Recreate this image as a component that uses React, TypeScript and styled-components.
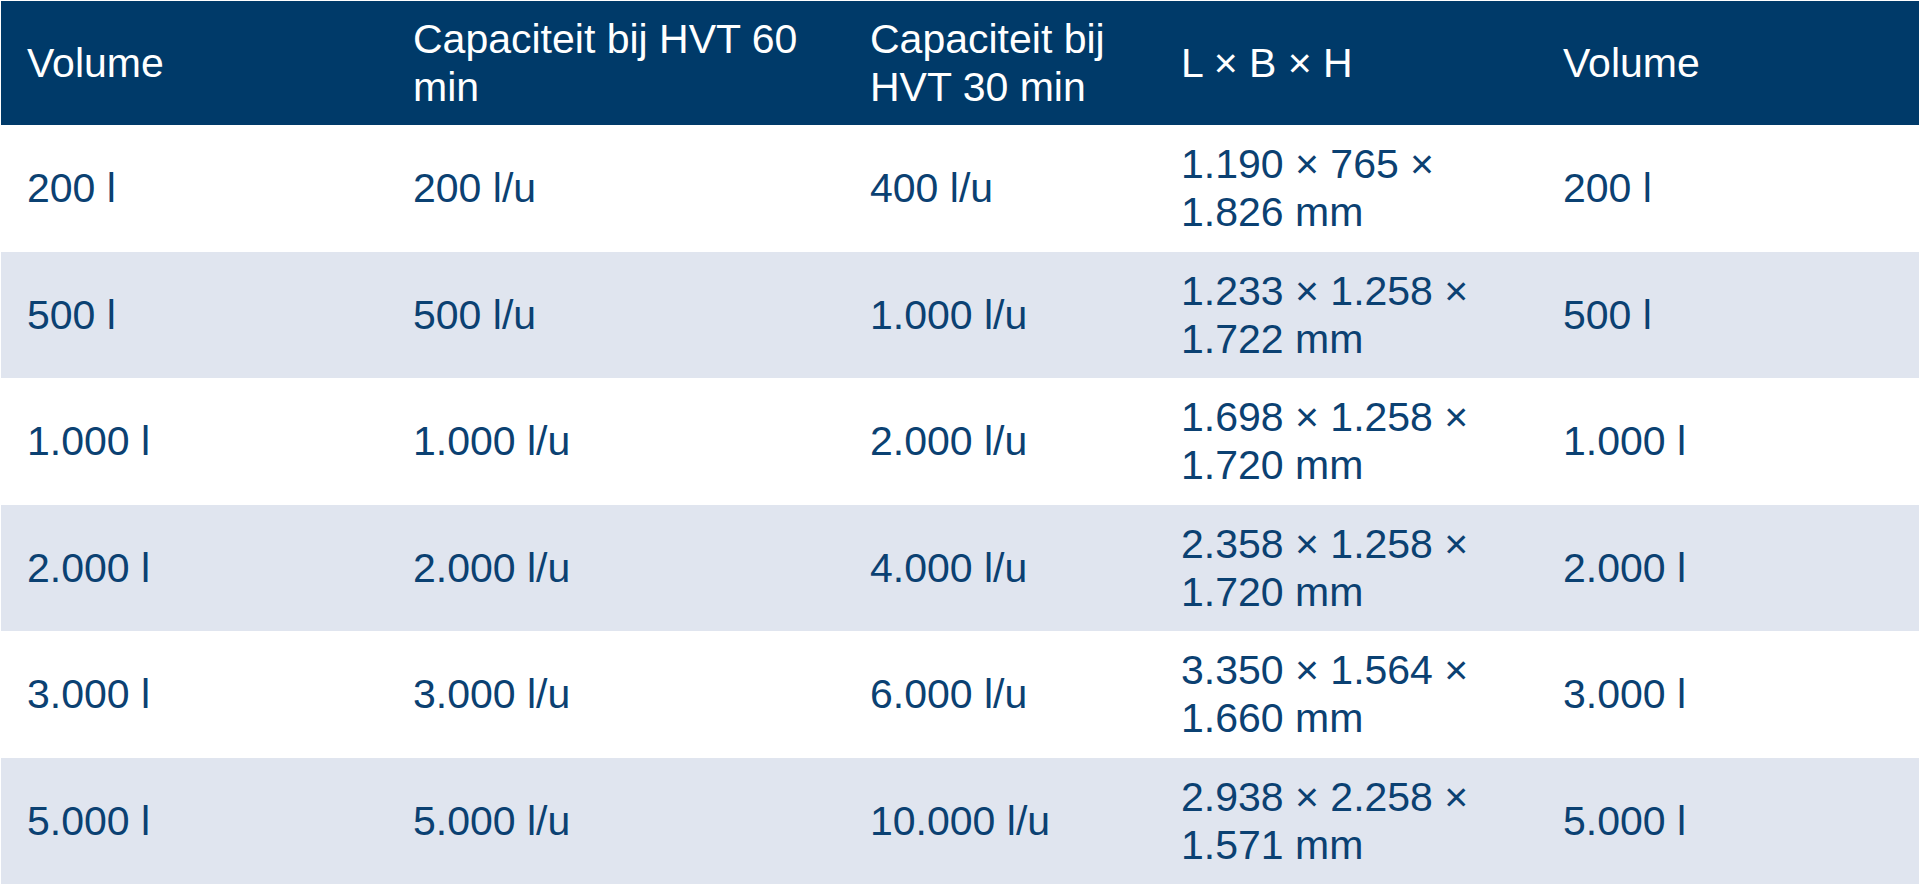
import styled, { createGlobalStyle } from "styled-components";

const GlobalStyle = createGlobalStyle`
  html, body {
    margin: 0;
    padding: 0;
    background: #ffffff;
  }
  body {
    padding: 1px;
    font-family: "Liberation Sans", Arial, Helvetica, sans-serif;
  }
`;

const Table = styled.table`
  width: 1918px;
  border-collapse: collapse;
  table-layout: fixed;
  font-size: 41px;
  line-height: 48px;
`;

const HeadRow = styled.tr`
  height: 124px;
  background: #003a69;
`;

const HeadCell = styled.th`
  padding: 0 26px;
  text-align: left;
  font-weight: 400;
  color: #ffffff;
  vertical-align: middle;
`;

interface RowProps {
  $striped: boolean;
}
const Row = styled.tr<RowProps>`
  height: 126.5px;
  background: ${(props) => (props.$striped ? "#e0e5ef" : "#ffffff")};
`;

const Cell = styled.td`
  padding: 0 26px;
  color: #0b4172;
  vertical-align: middle;
`;

const COLUMNS = [
  { title: "Volume", width: 386 },
  { title: "Capaciteit bij HVT 60 min", width: 457 },
  { title: "Capaciteit bij HVT 30 min", width: 311 },
  { title: "L × B × H", width: 382 },
  { title: "Volume", width: 382 },
];

const ROWS = [
  ["200 l", "200 l/u", "400 l/u", "1.190 × 765 × 1.826 mm", "200 l"],
  ["500 l", "500 l/u", "1.000 l/u", "1.233 × 1.258 × 1.722 mm", "500 l"],
  ["1.000 l", "1.000 l/u", "2.000 l/u", "1.698 × 1.258 × 1.720 mm", "1.000 l"],
  ["2.000 l", "2.000 l/u", "4.000 l/u", "2.358 × 1.258 × 1.720 mm", "2.000 l"],
  ["3.000 l", "3.000 l/u", "6.000 l/u", "3.350 × 1.564 × 1.660 mm", "3.000 l"],
  ["5.000 l", "5.000 l/u", "10.000 l/u", "2.938 × 2.258 × 1.571 mm", "5.000 l"],
];

export default function App() {
  return (
    <>
      <GlobalStyle />
      <Table>
        <colgroup>
          {COLUMNS.map((col, i) => (
            <col key={i} style={{ width: col.width }} />
          ))}
        </colgroup>
        <thead>
          <HeadRow>
            {COLUMNS.map((col, i) => (
              <HeadCell key={i}>{col.title}</HeadCell>
            ))}
          </HeadRow>
        </thead>
        <tbody>
          {ROWS.map((row, r) => (
            <Row key={r} $striped={r % 2 === 1}>
              {row.map((value, c) => (
                <Cell key={c}>{value}</Cell>
              ))}
            </Row>
          ))}
        </tbody>
      </Table>
    </>
  );
}
